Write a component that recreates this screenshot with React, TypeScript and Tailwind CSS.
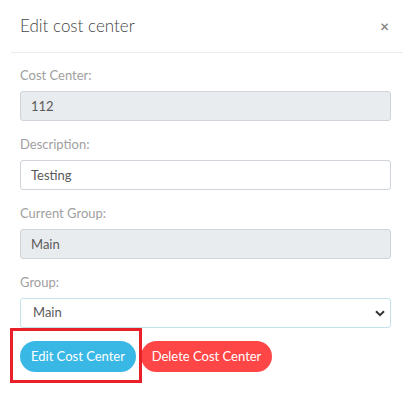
import { useState } from "react";

function Label({ children }: { children: React.ReactNode }) {
  return <div className="mb-[6px] text-[13px] leading-5 text-[#a0a0a0]">{children}</div>;
}

const field =
  "mb-[13px] block h-[30px] w-full rounded-[3px] border border-[#ced4da] px-[10px] text-[13px] text-[#5a5a5a] outline-none";

export default function App() {
  const [desc, setDesc] = useState("Testing");
  const [group, setGroup] = useState("Main");

  return (
    <div className="relative h-[410px] w-[406px] bg-white pl-[11px] pr-[3px]" style={{ fontFamily: "Lato, 'Noto Sans', sans-serif" }}>
      <div className="flex h-[53px] items-center justify-between border-b border-[#e9ecef] pl-[9px] pr-[14px]">
        <h4 className="text-[17px] font-light text-[#444]">Edit cost center</h4>
        <button className="text-[15px] font-bold leading-none text-[#888]">×</button>
      </div>

      <div className="pl-[9px] pr-[12px] pt-[12px]">
        <Label>Cost Center:</Label>
        <input readOnly value="112" className={`${field} bg-[#e9ecef]`} />

        <Label>Description:</Label>
        <input value={desc} onChange={(e) => setDesc(e.target.value)} className={`${field} bg-white`} />

        <Label>Current Group:</Label>
        <input readOnly value="Main" className={`${field} bg-[#e9ecef]`} />

        <Label>Group:</Label>
        <div className="relative mb-[13px]">
          <select
            value={group}
            onChange={(e) => setGroup(e.target.value)}
            className="block h-[30px] w-full appearance-none rounded-[3px] border border-[#c3e3eb] bg-white px-[12px] text-[13px] text-[#5a5a5a] outline-none"
          >
            <option>Main</option>
          </select>
          <svg className="pointer-events-none absolute right-[6px] top-[12px]" width="10" height="7" viewBox="0 0 10 7">
            <path d="M1 1.2 5 5.2 9 1.2" fill="none" stroke="#333" strokeWidth="2" />
          </svg>
        </div>

        <div className="flex gap-[5px]">
          <button className="h-[31px] w-[116px] rounded-full bg-[#39b8e6] text-[13px] text-white">Edit Cost Center</button>
          <button className="h-[31px] w-[131px] rounded-full bg-[#ff4646] text-[13px] text-white">Delete Cost Center</button>
        </div>
      </div>

      <div className="pointer-events-none absolute left-[10px] top-[328px] h-[55px] w-[132px] border-[3px] border-[#e8202a]" />
    </div>
  );
}
